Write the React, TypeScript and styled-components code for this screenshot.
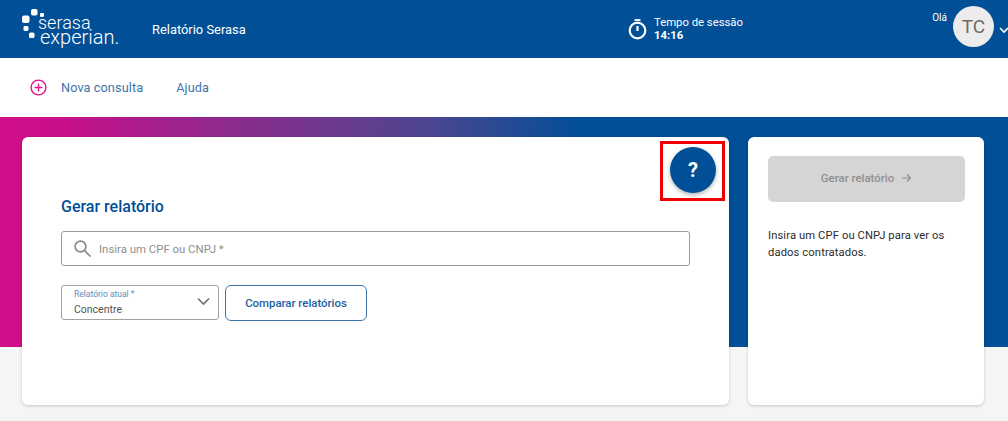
import React from "react";
import styled, { createGlobalStyle } from "styled-components";

const Global = createGlobalStyle`
  html, body { margin: 0; padding: 0; background: #f5f5f5; overflow: hidden; }
  body { font-family: Roboto, "Liberation Sans", sans-serif; }
  * { box-sizing: border-box; }
`;

const Page = styled.div`
  width: 1008px;
  height: 421px;
  display: flex;
  flex-direction: column;
  overflow: hidden;
`;

const Header = styled.header`
  height: 58px;
  flex: none;
  background: #004f97;
  color: #fff;
  display: grid;
  grid-template-columns: 22px 112px 488px 1fr auto;
  align-items: center;
`;

const Logo = styled.div`
  grid-column: 2;
  grid-row: 1;
  position: relative;
  height: 58px;
  padding: 15px 0 0 18px;
  display: flex;
  flex-direction: column;
  font-weight: 300;
  line-height: 15px;
`;

const LogoDots = styled.svg`
  position: absolute;
  left: 0;
  top: 8px;
`;

const LogoLine = styled.span<{ $indent?: number; $size: number }>`
  display: block;
  margin-left: ${(p) => p.$indent ?? 0}px;
  font-size: ${(p) => p.$size}px;
  white-space: nowrap;
`;

const Title = styled.div`
  grid-column: 3;
  grid-row: 1;
  padding: 0 0 0 18px;
  font-size: 12.9px;
  font-weight: 400;
`;

const Session = styled.div`
  grid-column: 4;
  grid-row: 1;
  display: flex;
  align-items: center;
  gap: 7px;
  padding: 0 0 0 6px;
`;

const SessionText = styled.div`
  display: flex;
  flex-direction: column;
  font-size: 11.3px;
  line-height: 13px;
  margin-top: -1px;
`;

const SessionTime = styled.strong`
  font-weight: 700;
`;

const User = styled.div`
  grid-column: 5;
  grid-row: 1;
  display: flex;
  align-items: center;
  height: 58px;
  margin-right: -1px;
`;

const Hello = styled.span`
  font-size: 10px;
  align-self: flex-start;
  margin: 12px 6px 0 0;
`;

const Avatar = styled.div`
  width: 41px;
  height: 41px;
  border-radius: 50%;
  background: #ececec;
  color: #6f6a66;
  font-size: 19px;
  display: flex;
  align-items: center;
  justify-content: center;
  margin: -6px 5px 0 0;
`;

const Chevron = styled.svg`
  margin: 2px 0 0 0;
  flex: none;
`;

const Nav = styled.nav`
  height: 59px;
  flex: none;
  background: #fff;
  display: flex;
  align-items: center;
  padding: 0 0 1px 30px;
  color: #3d74ab;
  font-size: 12.7px;
`;

const NavLink = styled.a<{ $gap: number }>`
  margin-left: ${(p) => p.$gap}px;
  letter-spacing: 0.1px;
`;

const Main = styled.main`
  flex: 1;
  padding: 20px 0 0 22px;
  display: grid;
  grid-template-columns: 707px 236px;
  column-gap: 19px;
  grid-template-rows: 268px;
  background:
    linear-gradient(90deg, #cf0e88 0%, #c90f8a 6%, #8f2a8c 22%, #4f4590 42%, #004f97 58%) top / 100% 230px no-repeat,
    #f5f5f5;
`;

const Card = styled.section`
  position: relative;
  background: #fff;
  border-radius: 6px;
  box-shadow: 0 1px 3px rgba(0, 0, 0, 0.2);
`;

const FormCard = styled(Card)`
  padding: 59px 39px 0 39px;
`;

const Heading = styled.h1`
  margin: 0 0 14px;
  color: #004f97;
  font-size: 16px;
  line-height: 21px;
  font-weight: 500;
`;

const SearchBox = styled.div`
  height: 35px;
  border: 1px solid #9a9a9a;
  border-radius: 3px;
  display: flex;
  align-items: center;
  padding: 0 0 0 11px;
  gap: 7px;
  color: #8e8e8e;
  font-size: 11.4px;
`;

const Controls = styled.div`
  display: flex;
  gap: 6px;
  margin-top: 19px;
`;

const SelectBox = styled.div`
  position: relative;
  width: 158px;
  height: 35px;
  border: 1px solid #a3a3a3;
  border-radius: 3px;
  padding: 3px 0 0 12px;
  display: flex;
  flex-direction: column;
`;

const SelectLabel = styled.span`
  color: #5e8fc0;
  font-size: 8.5px;
  line-height: 11px;
`;

const SelectValue = styled.span`
  color: #555;
  font-size: 10.5px;
  line-height: 14px;
  margin-top: 3px;
`;

const SelectArrow = styled.svg`
  position: absolute;
  right: 8px;
  top: 11px;
`;

const OutlineButton = styled.button`
  width: 142px;
  height: 36px;
  background: #fff;
  border: 1px solid #3d74ab;
  border-radius: 6px;
  color: #1d5f9f;
  font: 500 11.4px Roboto, sans-serif;
  padding: 0;
`;

const HelpFrame = styled.div`
  position: absolute;
  left: 638px;
  top: 4px;
  width: 65px;
  height: 60px;
  border: 3px solid #f00000;
  display: flex;
  align-items: center;
  justify-content: center;
  padding: 0 0 2px 1px;
`;

const HelpButton = styled.div`
  width: 46px;
  height: 46px;
  border-radius: 50%;
  background: #004f97;
  color: #fff;
  font-size: 20px;
  font-weight: 700;
  display: flex;
  align-items: center;
  justify-content: center;
  box-shadow: 0 2px 4px rgba(0, 0, 0, 0.3);
`;

const SideCard = styled(Card)`
  padding: 19px 19px 0 20px;
`;

const GenerateButton = styled.div`
  height: 46px;
  padding-bottom: 2px;
  background: #d5d5d5;
  border-radius: 5px;
  color: #8f8f8f;
  font-size: 11.4px;
  font-weight: 500;
  display: flex;
  align-items: center;
  justify-content: center;
  gap: 7px;
`;

const SideText = styled.p`
  margin: 25px 0 0;
  color: #2b2b2b;
  font-size: 11.2px;
  line-height: 17px;
  letter-spacing: 0.12px;
`;

export default function App() {
  return (
    <Page>
      <Global />
      <Header>
        <Logo>
          <LogoDots width="22" height="36" viewBox="0 0 22 36">
            <g fill="#fff">
              <rect x="9" y="1" width="6.5" height="6.5" rx="1.8" />
              <rect x="18" y="5" width="4" height="4" rx="1.1" />
              <rect x="0" y="7.5" width="7.5" height="7.5" rx="2" />
              <rect x="1.5" y="18" width="5" height="5" rx="1.4" />
              <rect x="7" y="24.5" width="5.5" height="5.5" rx="1.5" />
            </g>
          </LogoDots>
          <LogoLine $indent={-2} $size={18}>serasa</LogoLine>
          <LogoLine $size={20}>experian.</LogoLine>
        </Logo>
        <Title>Relatório Serasa</Title>
        <Session>
          <svg width="19" height="22" viewBox="0 0 19 22" fill="none" stroke="#fff">
            <path d="M6.5 2h6" strokeWidth="1.8" />
            <circle cx="9.5" cy="12.5" r="7.8" strokeWidth="2.2" />
            <path d="M9.5 8v5" strokeWidth="2.2" />
          </svg>
          <SessionText>
            <span>Tempo de sessão</span>
            <SessionTime>14:16</SessionTime>
          </SessionText>
        </Session>
        <User>
          <Hello>Olá</Hello>
          <Avatar>TC</Avatar>
          <Chevron width="10" height="7" viewBox="0 0 10 7" fill="none" stroke="#fff" strokeWidth="1.6">
            <path d="M1 1l4 4 4-4" />
          </Chevron>
        </User>
      </Header>
      <Nav>
        <svg width="17" height="17" viewBox="0 0 17 17" fill="none" stroke="#e0158f" strokeWidth="1.4">
          <circle cx="8.5" cy="8.5" r="7.4" />
          <path d="M8.5 4.5v8M4.5 8.5h8" />
        </svg>
        <NavLink $gap={14}>Nova consulta</NavLink>
        <NavLink $gap={33}>Ajuda</NavLink>
      </Nav>
      <Main>
        <FormCard>
          <Heading>Gerar relatório</Heading>
          <SearchBox>
            <svg width="19" height="19" viewBox="0 0 19 19" fill="none" stroke="#8a8a8a" strokeWidth="1.7">
              <circle cx="7.5" cy="7.5" r="5.4" />
              <path d="M11.5 11.5l6 6" />
            </svg>
            <span>Insira um CPF ou CNPJ *</span>
          </SearchBox>
          <Controls>
            <SelectBox>
              <SelectLabel>Relatório atual *</SelectLabel>
              <SelectValue>Concentre</SelectValue>
              <SelectArrow width="13" height="9" viewBox="0 0 13 9" fill="none" stroke="#6e6e6e" strokeWidth="1.6">
                <path d="M1 1.5l5.5 5.5 5.5-5.5" />
              </SelectArrow>
            </SelectBox>
            <OutlineButton>Comparar relatórios</OutlineButton>
          </Controls>
          <HelpFrame>
            <HelpButton>?</HelpButton>
          </HelpFrame>
        </FormCard>
        <SideCard>
          <GenerateButton>
            <span>Gerar relatório</span>
            <svg width="11" height="10" viewBox="0 0 11 10" fill="none" stroke="#8f8f8f" strokeWidth="1.1">
              <path d="M1 5h8.5M6 1.5L9.5 5 6 8.5" />
            </svg>
          </GenerateButton>
          <SideText>
            Insira um CPF ou CNPJ para ver os dados contratados.
          </SideText>
        </SideCard>
      </Main>
    </Page>
  );
}
